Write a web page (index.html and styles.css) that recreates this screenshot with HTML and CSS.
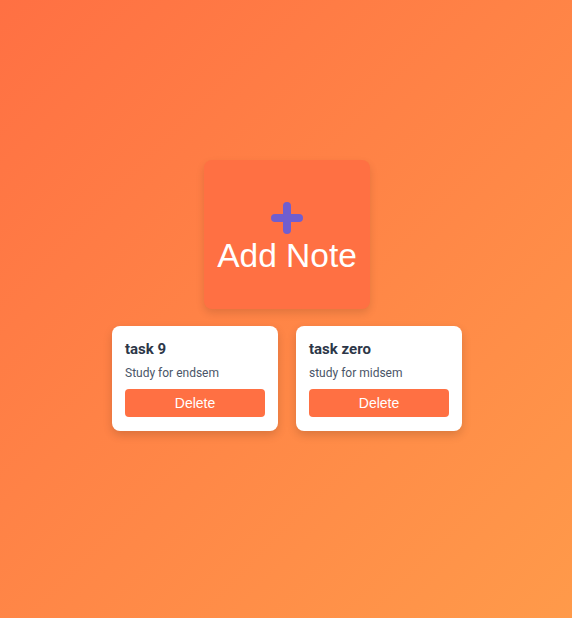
FILE: index.html
```html
<!DOCTYPE html>
<html lang="en">
<head>
<meta charset="utf-8">
<title>Notes</title>
<link rel="stylesheet" href="styles.css">
</head>
<body>
<main class="app">
  <button class="add-note" type="button">
    <svg class="plus" width="32" height="32" viewBox="0 0 32 32" aria-hidden="true">
      <path d="M4 16H28M16 4V28" stroke="#705ecf" stroke-width="8" stroke-linecap="round" fill="none"/>
    </svg>
    <span class="add-label">Add Note</span>
  </button>
  <section class="notes">
    <article class="note">
      <h3 class="note-title">task 9</h3>
      <p class="note-text">Study for endsem</p>
      <button class="delete" type="button">Delete</button>
    </article>
    <article class="note">
      <h3 class="note-title">task zero</h3>
      <p class="note-text">study for midsem</p>
      <button class="delete" type="button">Delete</button>
    </article>
  </section>
</main>
</body>
</html>
```
FILE: styles.css
```css
* { box-sizing: border-box; }
html, body { margin: 0; height: 100%; }
body {
  min-height: 100vh;
  background: linear-gradient(135deg, #ff7043 0%, #ff9a4a 100%);
  font-family: Roboto, "Noto Sans", sans-serif;
}
.app {
  display: flex;
  flex-direction: column;
  align-items: center;
  padding: 160px 0 0 2px;
}
.add-note {
  width: 166px;
  height: 149px;
  border: none;
  border-radius: 8px;
  background: #ff7043;
  box-shadow: 0 4px 8px rgba(0,0,0,0.12);
  display: flex;
  flex-direction: column;
  align-items: center;
  padding: 42px 0 0;
  cursor: pointer;
}
.plus { display: block; }
.add-label {
  font-family: "Liberation Sans", Arial, sans-serif;
  font-size: 33.5px;
  line-height: 37px;
  color: #fff;
  margin-top: 3px;
}
.notes {
  display: flex;
  gap: 18px;
  margin-top: 17px;
}
.note {
  width: 166px;
  background: #fff;
  border-radius: 8px;
  padding: 13px 13px 14px;
  box-shadow: 0 4px 10px rgba(0,0,0,0.15);
}
.note-title {
  margin: 0;
  font-size: 15px;
  line-height: 20px;
  font-weight: 700;
  color: #2d3748;
}
.note-text {
  margin: 6px 0 8px;
  font-size: 12px;
  line-height: 16px;
  color: #4a5568;
}
.delete {
  display: block;
  width: 100%;
  height: 28px;
  border: none;
  border-radius: 4px;
  background: #ff7043;
  color: #fff;
  font-family: "Liberation Sans", Arial, sans-serif;
  font-size: 14px;
  cursor: pointer;
}
```
